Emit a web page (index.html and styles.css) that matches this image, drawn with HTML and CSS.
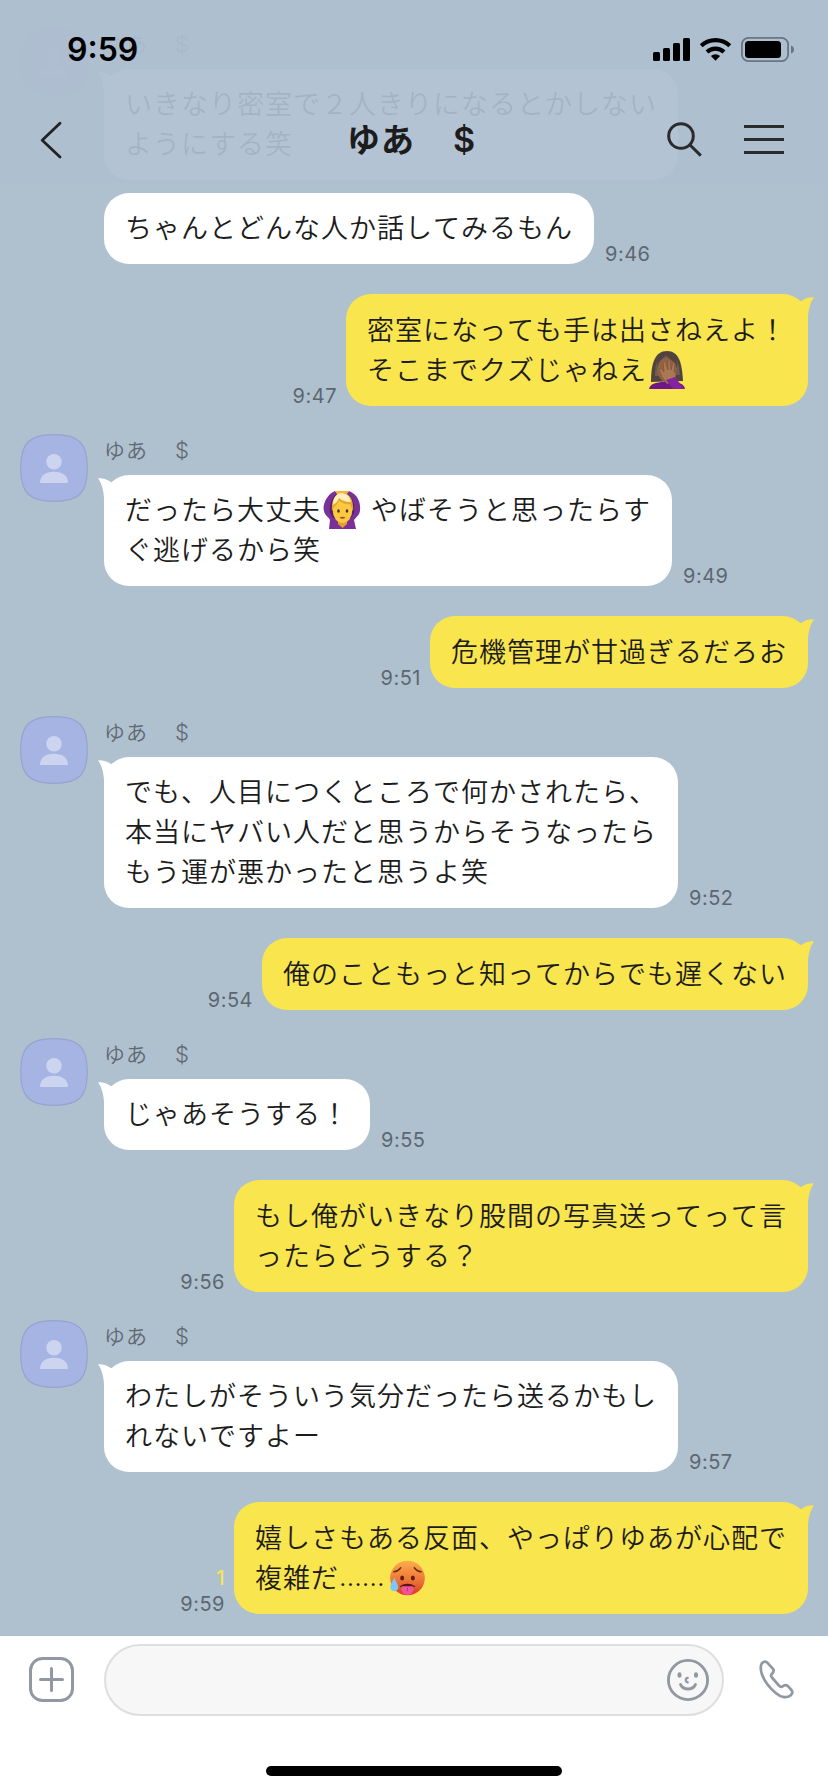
FILE: index.html
```html
<!DOCTYPE html>
<html lang="ja">
<head>
<meta charset="utf-8">
<title>ゆあ　$</title>
<link rel="stylesheet" href="styles.css">
</head>
<body>
<svg class="defs" width="0" height="0">
  <symbol id="avatar" viewBox="0 0 68 68">
    <path d="M34 .7C59 .7 67.3 9 67.3 34S59 67.3 34 67.3.7 59 .7 34 9 .7 34 .7z" fill="#a6b4e3" stroke="#94a4cf" stroke-width="1.2"/>
    <circle cx="34" cy="27.7" r="7.7" fill="#ccd4ef"/>
    <path d="M20 49c0-7 5-11.200 14-11.200S48 42 48 49z" fill="#ccd4ef"/>
  </symbol>
  <symbol id="tail" viewBox="0 0 20 26">
    <path d="M0 .2C5 0 9.500 1.200 13.700 4.600L18 14 6.200 24C6 13 4 6 0 .2z" fill="currentColor"/>
  </symbol>
</svg>
<div class="screen">
  <main class="chat">
    <section class="incoming">
      <svg class="avatar faded"><use href="#avatar"/></svg>
      <div class="column">
        <div class="name">ゆあ　<span class="latin">$</span></div>
        <div class="row"><div class="bubble white"><svg class="tail"><use href="#tail"/></svg>いきなり密室で２人きりになるとかしない<br>ようにする笑</div></div>
        <div class="row next"><div class="bubble white">ちゃんとどんな人か話してみるもん</div><time>9:46</time></div>
      </div>
    </section>

    <section class="outgoing">
      <time>9:47</time>
      <div class="bubble yellow"><svg class="tail"><use href="#tail"/></svg>密室になっても手は出さねえよ！<br>そこまでクズじゃねえ<svg class="emoji" viewBox="0 0 38 38">
        <path d="M3 31C3 12 7 0 19 0s15 12 16 30z" fill="#51443f"/>
        <path d="M7 25C7 11 10 3 20 2c8 2 11 10 12 22z" fill="#6d5d55"/>
        <ellipse cx="19" cy="19" rx="9.500" ry="12" fill="#93643f"/>
        <path d="M9 17C10 9 15 8 18 4c4 5 9 6 11 13C30 5 25 1 19 1S8 6 9 17z" fill="#51443f"/>
        <path d="M1 38c1-5 6-6 12-7h13c6 1 10 2 11 7z" fill="#6f168b"/>
        <path d="M14 26l-3-8 2-1 3 4-1-10 2-1 3 9V9h2l1 10 2-8 2 1-1 9 2 1-1 8-8 3z" fill="#a97955" stroke="#7c5133" stroke-width=".7"/>
        <path d="M18 29l9-3 9 12H25z" fill="#8422a0"/>
      </svg></div>
    </section>

    <section class="incoming">
      <svg class="avatar"><use href="#avatar"/></svg>
      <div class="column">
        <div class="name">ゆあ　<span class="latin">$</span></div>
        <div class="row"><div class="bubble white ok"><svg class="tail"><use href="#tail"/></svg>だったら大丈夫<svg class="emoji ok-emoji" viewBox="0 0 38 38">
          <path d="M12 0C4 3-1 14 1 20c1 5 5 6 6 9l-1 9h27l-2-9c2-3 6-5 6-10C38 11 34 3 26 0l-4 4h-7z" fill="#7a3099"/>
          <path d="M12 4C8 9 6 14 7 22l3 5h18l3-5c1-9-1-14-5-18z" fill="#542070"/>
          <path d="M12 0h14l-3 4h-8z" fill="#f5b82e"/>
          <path d="M15 28h9v5l-4.500 4L15 33z" fill="#e3a12c"/>
          <ellipse cx="19.500" cy="19" rx="9.800" ry="13" fill="#fbc841"/>
          <path d="M9 20C8 9 12 3 19 2c8 0 12 7 11 18-2-3-2-6-3-7-5 1-10-2-11-4-1 4-4 6-5 7z" fill="#e7a52c"/>
          <path d="M10 14c0-8 4-12 9-12 6 1 8 4 9 9-6 0-10-2-12-4-1 3-3 5-6 7z" fill="#fff0bb"/>
          <ellipse cx="15.500" cy="20" rx="1.300" ry="1.800" fill="#44301d"/><ellipse cx="24" cy="20" rx="1.300" ry="1.800" fill="#44301d"/>
          <path d="M16.500 26.500q3-1.500 6 0-3 2.500-6 0z" fill="#a64824"/>
        </svg>やばそうと思ったらす<br>ぐ逃げるから笑</div><time>9:49</time></div>
      </div>
    </section>

    <section class="outgoing">
      <time>9:51</time>
      <div class="bubble yellow"><svg class="tail"><use href="#tail"/></svg>危機管理が甘過ぎるだろお</div>
    </section>

    <section class="incoming">
      <svg class="avatar"><use href="#avatar"/></svg>
      <div class="column">
        <div class="name">ゆあ　<span class="latin">$</span></div>
        <div class="row"><div class="bubble white"><svg class="tail"><use href="#tail"/></svg>でも、人目につくところで何かされたら、<br>本当にヤバい人だと思うからそうなったら<br>もう運が悪かったと思うよ笑</div><time>9:52</time></div>
      </div>
    </section>

    <section class="outgoing">
      <time>9:54</time>
      <div class="bubble yellow"><svg class="tail"><use href="#tail"/></svg>俺のこともっと知ってからでも遅くない</div>
    </section>

    <section class="incoming">
      <svg class="avatar"><use href="#avatar"/></svg>
      <div class="column">
        <div class="name">ゆあ　<span class="latin">$</span></div>
        <div class="row"><div class="bubble white"><svg class="tail"><use href="#tail"/></svg>じゃあそうする！</div><time>9:55</time></div>
      </div>
    </section>

    <section class="outgoing">
      <time>9:56</time>
      <div class="bubble yellow"><svg class="tail"><use href="#tail"/></svg>もし俺がいきなり股間の写真送ってって言<br>ったらどうする？</div>
    </section>

    <section class="incoming">
      <svg class="avatar"><use href="#avatar"/></svg>
      <div class="column">
        <div class="name">ゆあ　<span class="latin">$</span></div>
        <div class="row"><div class="bubble white"><svg class="tail"><use href="#tail"/></svg>わたしがそういう気分だったら送るかもし<br>れないですよー</div><time>9:57</time></div>
      </div>
    </section>

    <section class="outgoing">
      <time><span class="unread">1</span>9:59</time>
      <div class="bubble yellow"><svg class="tail"><use href="#tail"/></svg>嬉しさもある反面、やっぱりゆあが心配で<br>複雑だ<span class="dots">……</span><svg class="emoji hot" viewBox="0 0 38 38">
        <defs><linearGradient id="heat" x1="0" y1="0" x2="0" y2="1"><stop offset="0" stop-color="#f9ae4c"/><stop offset=".55" stop-color="#ee7637"/><stop offset="1" stop-color="#d93a25"/></linearGradient></defs>
        <circle cx="19" cy="18.500" r="17.800" fill="url(#heat)"/>
        <path d="M5 12q4 0 7-4M26 8q3 4 7 4" fill="none" stroke="#6b2a14" stroke-width="1.600" stroke-linecap="round"/>
        <ellipse cx="13.500" cy="18.500" rx="2" ry="2.600" fill="#5a2110"/><ellipse cx="24.500" cy="18.500" rx="2" ry="2.600" fill="#5a2110"/>
        <path d="M11 27q8-5 16 0l-1 1H12z" fill="#5a1510"/>
        <path d="M13 27h12c1 6-2 9-6 9s-7-3-6-9z" fill="#f0559c"/>
        <path d="M19 28v4" stroke="#c93478" stroke-width="1"/>
        <path d="M5.500 18C3 23 1 26 1.500 29c.5 4 7 4 8 0 .5-3-2-6-4-11z" fill="#7cc8f4"/>
      </svg></div>
    </section>
  </main>

  <header class="header">
    <div class="status">
      <span class="clock">9:59</span>
      <svg class="indicators" width="142" height="27" viewBox="652 36 142 27">
        <g><rect x="653" y="52" width="7" height="9" rx="1.500"/><rect x="663" y="48" width="7" height="13" rx="1.500"/><rect x="673" y="43" width="7" height="18" rx="1.500"/><rect x="683" y="38" width="7" height="23" rx="1.500"/></g>
        <g fill="none" stroke="#000" stroke-width="4.200"><path d="M701.200 45.800a21 21 0 0 1 28.600 0"/><path d="M707 52a12.600 12.600 0 0 1 17 0"/></g>
        <path d="M715.500 60.800l-4.600-4.800a6.600 6.600 0 0 1 9.200 0z"/>
        <rect x="741.900" y="37.900" width="46.200" height="23.200" rx="6.500" fill="none" stroke="#6a7581" stroke-width="1.800"/>
        <rect x="745" y="41" width="36" height="17" rx="3.500"/>
        <path d="M791 45.500q3 1 3 4t-3 4z" fill="#6a7581"/>
      </svg>
    </div>
    <div class="titlebar">
      <svg class="back" width="24" height="40" viewBox="40 120 24 40"><path d="M60 123.300L42.200 140.300l17.800 16.700" fill="none" stroke="#222" stroke-width="2.800" stroke-linecap="round" stroke-linejoin="round"/></svg>
      <h1 class="title">ゆあ　<span class="latin">$</span></h1>
      <svg class="tools" width="120" height="40" viewBox="666 120 120 40" fill="none" stroke="#2a2b2d" stroke-width="3"><circle cx="681" cy="136" r="12.300"/><path d="M689.800 144.800l11 10.800M744 126.500h40M744 139.500h40M744 152.500h40"/></svg>
    </div>
  </header>

  <footer class="composer">
    <div class="controls">
      <svg class="plus" width="46" height="46" viewBox="0 0 46 46" fill="none" stroke="#9298a1" stroke-width="3" stroke-linecap="round"><rect x="1.500" y="1.500" width="42" height="42" rx="12"/><path d="M11.500 22.500h22M22.500 11.500v22"/></svg>
      <div class="field">
        <svg width="42" height="42" viewBox="0 0 42 42" fill="none" stroke="#9298a1" stroke-width="2.800" stroke-linecap="round"><circle cx="21" cy="21" r="19.600"/><path d="M13.500 25.500c3 6 12 6 15 0"/><path d="M20.800 18.800c-2.700.3-2.700 4.200 0 4.600" stroke-width="2.200"/><path d="M12.500 15.200v1.600M29 15.200v1.600" stroke-width="4"/></svg>
      </div>
      <svg class="phone" width="36" height="42" viewBox="758 1659 36 42" fill="none" stroke="#9298a1" stroke-width="2.700" stroke-linejoin="round"><path d="M761 1665.500c.5-3.500 4-5 6.500-2.700l5.700 6.400c1.600 2-.2 3.500-1.800 5.300-.8 1-.3 2 .5 3l7 8c1.200 1.300 2 1.800 3.300 1 2-1.300 3.500-2.500 5.500-.6l3.300 3.600c2 2.300 1.700 4-.3 5.700-3.500 3-9.500 2.700-15-2.200-6-5-11.500-12.500-13.700-18.500-1.200-3.300-1.500-6.500-1-9z"/></svg>
    </div>
    <div class="home"></div>
  </footer>
</div>
</body>
</html>
```

FILE: styles.css
```css
* { box-sizing: border-box; }
body { margin: 0; font-family: Inter, "Noto Sans CJK JP", sans-serif; }
.defs { position: absolute; }
.screen { position: relative; display: flex; flex-direction: column; width: 828px; height: 1792px; overflow: hidden; background: #afc0cf; }

.chat { flex: 1; min-height: 0; padding: 28px 20px 0; }
.incoming { display: flex; gap: 16px; }
.avatar { flex: none; width: 68px; height: 68px; }
.faded { opacity: .4; }
.column { flex: 1; }
.name { height: 41px; font: 21px/31px "Noto Sans CJK JP", sans-serif; font-weight: 350; letter-spacing: 1px; font-kerning: none; color: #5f6972; }
.latin { font-family: Inter, sans-serif; }
.name .latin { font-size: 22px; padding-left: 5px; }
.row { display: flex; align-items: flex-end; gap: 11px; }
.next { margin-top: 13px; }
.outgoing { display: flex; justify-content: flex-end; align-items: flex-end; gap: 9px; margin: 30px 0 28px; }

.bubble { position: relative; padding: 14px 21px 17px; border-radius: 25px; font: 27px/40px "Noto Sans CJK JP", sans-serif; font-weight: 350; letter-spacing: 1px; font-kerning: none; white-space: nowrap; color: #1c1c1c; }
.yellow { padding: 15px 21px 17px; background: #f9e54e; }
.white { background: #fff; }
.tail { position: absolute; top: 3px; left: -6px; width: 20px; height: 26px; color: #fff; }
.yellow .tail { left: auto; right: -6px; transform: scaleX(-1); color: #f9e54e; }
.ok { width: 568px; }
.emoji { position: relative; top: -7px; width: 38px; height: 38px; margin: -8px 0 -7px 1px; vertical-align: -9px; }
.ok-emoji { margin: -8px 10px -7px 2px; }
.hot { width: 37px; height: 37px; }
.dots { display: inline-block; width: 49px; height: 40px; vertical-align: top; font-family: Inter, sans-serif; letter-spacing: 0; }

time { font-size: 20px; line-height: 24px; letter-spacing: .5px; color: #5d6770; }
.incoming time { margin-bottom: -2px; }
.outgoing time { display: flex; flex-direction: column; align-items: flex-end; margin-bottom: -2px; }
.unread { margin-bottom: 2px; font-weight: 500; color: #f6e35a; }

.header { position: absolute; inset: 0 0 auto; height: 183px; background: rgba(174, 190, 208, .93); }
.status { display: flex; justify-content: space-between; align-items: center; height: 99px; padding: 0 34px 0 67px; }
.clock { font-size: 32px; font-weight: 600; line-height: 40px; color: #000; }
.titlebar { display: flex; justify-content: space-between; align-items: center; height: 82px; padding: 0 42px 0 40px; }
.title { margin: -3px 0 0 93px; font: bold 33px/48px "Noto Sans CJK JP", sans-serif; letter-spacing: 1px; font-kerning: none; color: #1c1c1c; }
.title .latin { font-weight: 600; font-size: 34px; padding-left: 4px; }

.composer { flex: none; display: flex; flex-direction: column; align-items: center; justify-content: space-between; height: 156px; padding: 8px 0 16px; background: #fff; }
.controls { display: flex; align-items: center; align-self: stretch; padding: 0 34px 0 29px; }
.field { display: flex; align-items: center; justify-content: flex-end; flex: 1; height: 72px; margin: 0 34px 0 29px; padding-right: 13px; border: 2px solid #dedede; border-radius: 36px; background: #f7f7f7; }
.home { width: 296px; height: 10px; border-radius: 5px; background: #000; }
```
